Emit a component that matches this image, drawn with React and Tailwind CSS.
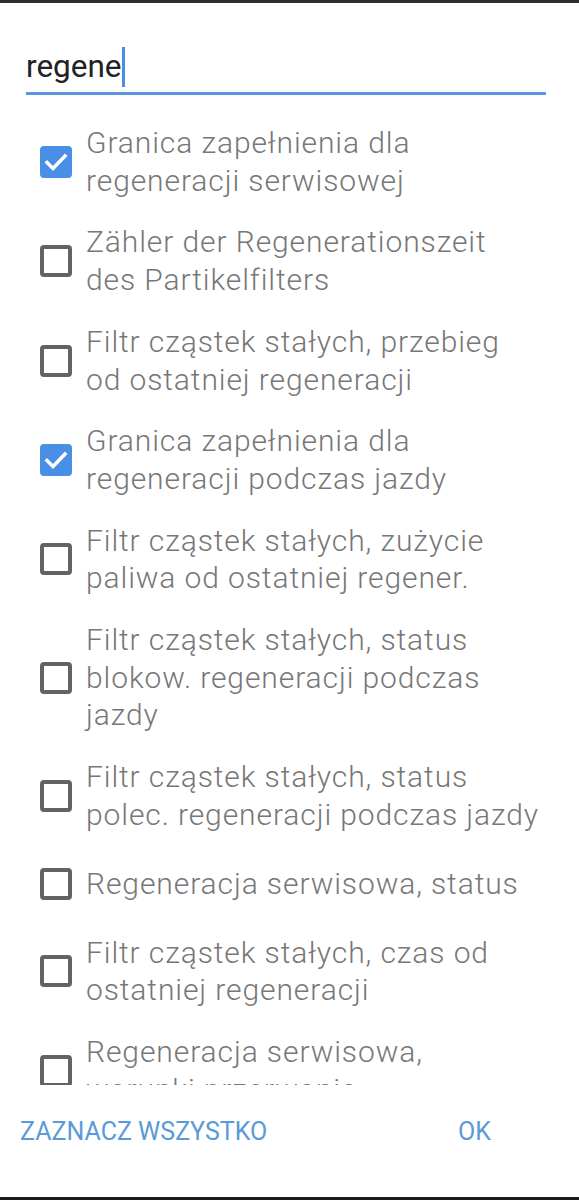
import { useState } from "react";

const ITEMS = [
  { lines: ["Granica zapełnienia dla", "regeneracji serwisowej"], checked: true },
  { lines: ["Zähler der Regenerationszeit", "des Partikelfilters"], checked: false },
  { lines: ["Filtr cząstek stałych, przebieg", "od ostatniej regeneracji"], checked: false },
  { lines: ["Granica zapełnienia dla", "regeneracji podczas jazdy"], checked: true },
  { lines: ["Filtr cząstek stałych, zużycie", "paliwa od ostatniej regener."], checked: false },
  { lines: ["Filtr cząstek stałych, status", "blokow. regeneracji podczas", "jazdy"], checked: false },
  { lines: ["Filtr cząstek stałych, status", "polec. regeneracji podczas jazdy"], checked: false },
  { lines: ["Regeneracja serwisowa, status"], checked: false },
  { lines: ["Filtr cząstek stałych, czas od", "ostatniej regeneracji"], checked: false },
  { lines: ["Regeneracja serwisowa,", "warunki przerwania"], checked: false },
];

function Checkbox({ checked }) {
  if (checked) {
    return (
      <div className="w-[32px] h-[32px] rounded-[4px] bg-[#4a8fe6] shrink-0">
        <svg width="32" height="32" viewBox="0 0 32 32" fill="none">
          <path d="M7 16.5l6 6L25 10" stroke="white" strokeWidth="3.5" strokeLinecap="square" />
        </svg>
      </div>
    );
  }
  return <div className="w-[32px] h-[32px] rounded-[4px] border-[4px] border-[#636363] shrink-0" />;
}

export default function App() {
  const [items, setItems] = useState(ITEMS);

  function toggle(idx) {
    setItems(items.map((it, i) => (i === idx ? { ...it, checked: !it.checked } : it)));
  }

  return (
    <div
      className="w-[579px] h-[1200px] bg-white flex flex-col border-t-[3px] border-[#2e2e2e] overflow-hidden"
      style={{ fontFamily: "Roboto, 'Noto Sans', sans-serif" }}
    >
      {/* Search field */}
      <div className="pt-[44px] px-[26px] pr-[33px]">
        <div className="border-b-[3px] border-[#5b96dc] pb-[5px] flex items-center">
          <span className="text-[31.5px] leading-[40px] text-[#222]">regene</span>
          <span className="w-[3px] h-[40px] bg-[#4a8fe6]" />
        </div>
      </div>

      {/* List */}
      <div className="flex-1 min-h-0 overflow-hidden pt-[17px]">
        {items.map((item, idx) => (
          <div
            key={idx}
            onClick={() => toggle(idx)}
            className="flex items-center gap-[14px] pl-[40px] pr-[30px] py-[12px] min-h-[76px] cursor-pointer"
          >
            <Checkbox checked={item.checked} />
            <div className="text-[30px] leading-[37.7px] tracking-[0.9px] font-light text-[#777] whitespace-nowrap">
              {item.lines.map((l, i) => (
                <div key={i}>{l}</div>
              ))}
            </div>
          </div>
        ))}
      </div>

      {/* Buttons */}
      <div className="h-[112px] shrink-0 flex items-center justify-between pl-[20px] pr-[88px] pb-[18px]">
        <button className="text-[25px] text-[#5b9ad8]">ZAZNACZ WSZYSTKO</button>
        <button className="text-[25px] text-[#5b9ad8]">OK</button>
      </div>

      <div className="h-[3px] bg-[#1a1a1a] shrink-0" />
    </div>
  );
}
